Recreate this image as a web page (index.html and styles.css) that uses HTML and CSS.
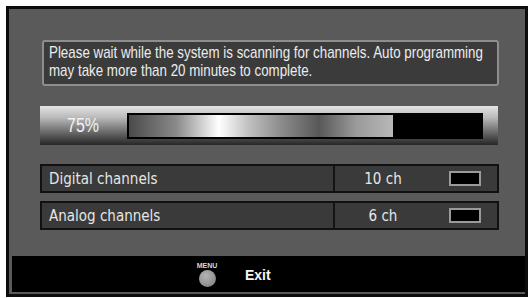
FILE: index.html
```html
<!DOCTYPE html>
<html lang="en">
<head>
    <meta charset="UTF-8">
    <meta name="viewport" content="width=device-width, initial-scale=1.0">
    <title>Channel Scan</title>
    <link rel="stylesheet" href="styles.css">
</head>
<body>
    <div class="frame">
        <div class="content">
            <div class="message">
                <p>Please wait while the system is scanning for channels. Auto programming may take more than 20 minutes to complete.</p>
            </div>

            <div class="progress">
                <div class="percent"><span>75%</span></div>
                <div class="track">
                    <div class="fill" style="width: 75%"></div>
                </div>
            </div>

            <div class="row">
                <span class="row-name">Digital channels</span>
                <div class="row-value">
                    <span class="count">10 ch</span>
                    <span class="box"></span>
                </div>
            </div>
            <div class="row">
                <span class="row-name">Analog channels</span>
                <div class="row-value">
                    <span class="count">6 ch</span>
                    <span class="box"></span>
                </div>
            </div>
        </div>

        <div class="footer">
            <div class="menu-key">
                <span class="menu-label">MENU</span>
                <span class="menu-button"></span>
            </div>
            <span class="exit">Exit</span>
        </div>
    </div>
</body>
</html>
```

FILE: styles.css
```css
*{
    padding: 0;
    margin: 0;
    box-sizing: border-box;
}
body{
    background: #ffffff;
    font-family: "Liberation Sans",sans-serif;
}
.frame{
    margin: 6px 0 0 6px;
    width: 522px;
    height: 291px;
    border: 3px solid #0c0c0c;
    background: #5a5a5a;
    display: flex;
    flex-direction: column;
}
.content{
    flex: 1;
    padding: 31px 26px 0 31px;
    display: flex;
    flex-direction: column;
}
.message{
    margin-left: 2px;
    height: 46px;
    border: 2px solid #8e8e8e;
    border-radius: 3px;
    background: #3b3b3b;
    padding: 2px 5px;
    overflow: hidden;
}
/* the panel font is a narrow sans, so squeeze Liberation Sans */
.message p{
    width: 562px;
    color: #ececec;
    font-size: 17px;
    line-height: 18px;
    transform: scaleX(0.785);
    transform-origin: left top;
}
.progress{
    margin-top: 20px;
    margin-right: 1px;
    height: 39px;
    background: linear-gradient(180deg,#e4e4e4 0%,#b9b9b9 30%,#6e6e6e 65%,#262626 100%);
    display: flex;
    align-items: center;
    padding-right: 15px;
}
.percent{
    width: 87px;
    text-align: center;
    color: #f2f2f2;
    font-size: 20px;
}
.percent span{
    display: inline-block;
    transform: scaleX(0.8);
}
.track{
    flex: 1;
    height: 26px;
    border: 2px solid #000000;
    background: #000000;
}
.fill{
    height: 100%;
    background: linear-gradient(90deg,#4a4a4a 0%,#8a8a8a 18%,#ffffff 34%,#bdbdbd 46%,#8a8a8a 58%,#585858 72%,#9a9a9a 86%,#b8b8b8 100%);
}
.row{
    height: 29px;
    margin-top: 19px;
    border: 2px solid #111111;
    background: #3a3a3a;
    display: flex;
    align-items: center;
}
.row + .row{
    margin-top: 8px;
}
.row-name{
    flex: 1;
    padding-left: 7px;
    color: #e6e6e6;
    font-family: "DejaVu Sans","Liberation Sans",sans-serif;
    font-size: 15px;
    font-stretch: condensed;
}
.row-value{
    width: 164px;
    height: 100%;
    border-left: 2px solid #141414;
    display: flex;
    align-items: center;
}
.count{
    width: 96px;
    text-align: center;
    color: #e6e6e6;
    font-family: "DejaVu Sans","Liberation Sans",sans-serif;
    font-size: 15px;
    font-stretch: condensed;
}
.box{
    margin-left: 18px;
    width: 32px;
    height: 15px;
    border: 2px solid #9a9a9a;
    background: #000000;
}
.footer{
    height: 36px;
    margin: 0 0 2px 3px;
    background: #000000;
    display: flex;
    align-items: center;
    padding-left: 186px;
    gap: 29px;
}
.menu-key{
    display: flex;
    flex-direction: column;
    align-items: center;
    width: 18px;
}
.menu-label{
    color: #d8d8d8;
    font-size: 7px;
    font-weight: bold;
    line-height: 7px;
}
.menu-button{
    margin-top: 1px;
    width: 17px;
    height: 17px;
    border-radius: 50%;
    background: radial-gradient(circle at 40% 35%,#b4b4b4,#8c8c8c 70%,#6e6e6e);
}
.exit{
    color: #f4f4f4;
    font-size: 14px;
    font-weight: bold;
    margin-top: 2px;
}
```
